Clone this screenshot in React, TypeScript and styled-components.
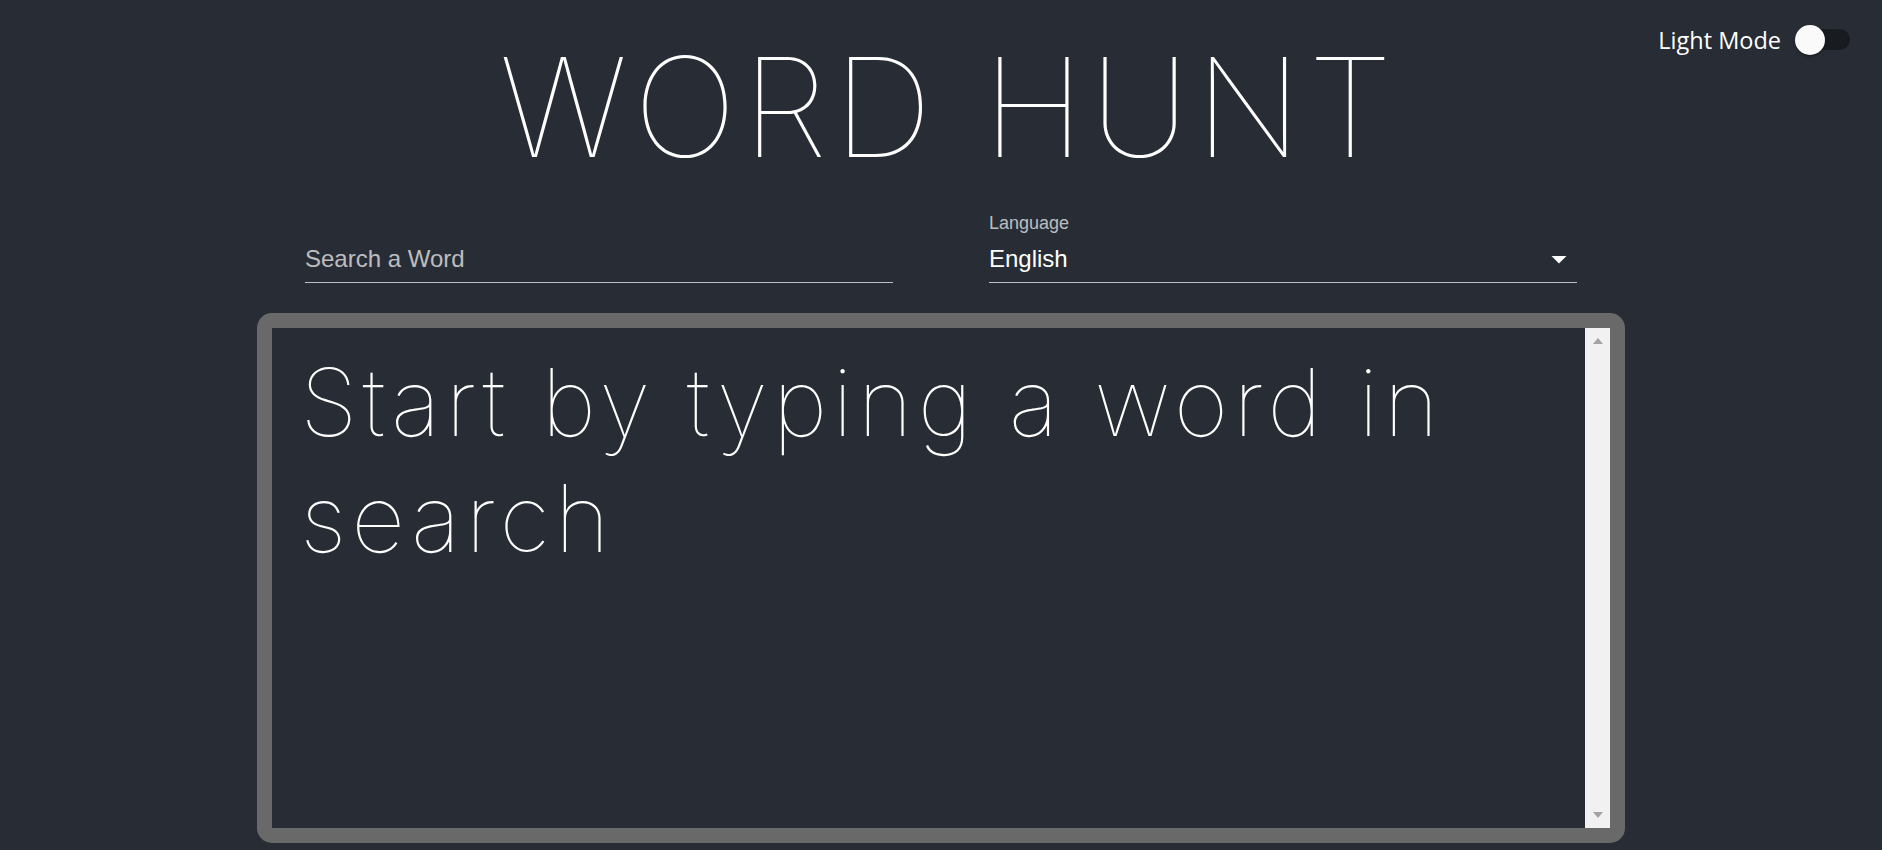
import React, { useState } from "react";
import styled, { createGlobalStyle } from "styled-components";

const GlobalStyle = createGlobalStyle`
  * { box-sizing: border-box; }
  body {
    margin: 0;
    background: #282c34;
    font-family: "Open Sans", "Noto Sans", sans-serif;
  }
`;

const Page = styled.div`
  position: relative;
  min-height: 100vh;
  padding-top: 38px;
  background: #282c34;
  color: #fff;
`;

const ModeToggle = styled.div`
  position: absolute;
  top: 11px;
  right: 14px;
  display: flex;
  align-items: center;
  font-family: "Open Sans", "Noto Sans", sans-serif;
  font-size: 23.5px;
  color: #fff;
`;

const SwitchRoot = styled.span`
  position: relative;
  display: inline-flex;
  width: 87px;
  height: 57px;
  padding: 18px;
  cursor: pointer;
`;

const SwitchTrack = styled.span`
  width: 100%;
  height: 100%;
  border-radius: 10.5px;
  background: #000;
  opacity: 0.38;
`;

const SwitchThumb = styled.span<{ $on: boolean }>`
  position: absolute;
  top: 13.5px;
  left: ${(p) => (p.$on ? "43.5px" : "13.5px")};
  width: 30px;
  height: 30px;
  border-radius: 50%;
  background: #fafafa;
  box-shadow: 0 3px 1.5px -2px rgba(0, 0, 0, 0.2),
    0 1.5px 1.5px 0 rgba(0, 0, 0, 0.14), 0 1.5px 4.5px 0 rgba(0, 0, 0, 0.12);
`;

const Title = styled.h1`
  margin: 0;
  padding-left: 16px;
  text-align: center;
  font-family: Inter, sans-serif;
  font-weight: 100;
  font-size: 138px;
  line-height: 1;
  letter-spacing: 6px;
`;

const Container = styled.div`
  width: 1368px;
  margin: 34px auto 0;
`;

const Controls = styled.div`
  display: flex;
  justify-content: space-around;
`;

const Field = styled.div`
  position: relative;
  width: 588px;
  font-family: "Liberation Sans", Arial, sans-serif;
`;

const FieldLabel = styled.label<{ $shrink?: boolean }>`
  position: absolute;
  left: 0;
  top: ${(p) => (p.$shrink ? "1.5px" : "31.5px")};
  font-size: ${(p) => (p.$shrink ? "18px" : "24px")};
  line-height: ${(p) => (p.$shrink ? "22px" : "34.5px")};
  color: rgba(255, 255, 255, 0.7);
  pointer-events: none;
`;

const InputRow = styled.div`
  display: flex;
  align-items: center;
  margin-top: 24px;
  padding: 7.5px 0 6px;
  border-bottom: 1.5px solid rgba(255, 255, 255, 0.7);
`;

const TextInput = styled.input`
  flex: 1;
  height: 34.5px;
  padding: 0;
  border: none;
  outline: none;
  background: transparent;
  font-family: "Liberation Sans", Arial, sans-serif;
  font-size: 24px;
  color: #fff;
`;

const SelectValue = styled.div`
  flex: 1;
  height: 34.5px;
  line-height: 34.5px;
  font-size: 24px;
  color: #fff;
`;

const DropIcon = styled.svg`
  width: 36px;
  height: 36px;
  margin: -1px 0 -1px;
  fill: #fff;
`;

const ResultBox = styled.div`
  display: flex;
  height: 530px;
  margin-top: 29.5px;
  border: 15px solid #696969;
  border-radius: 15px;
  background: #282c34;
  overflow: hidden;
`;

const ResultText = styled.div`
  flex: 1;
  padding: 16px 28px;
  font-family: Inter, sans-serif;
  font-weight: 100;
  font-size: 94px;
  line-height: 116px;
  letter-spacing: 5px;
  color: #fff;
`;

const ScrollTrack = styled.div`
  display: flex;
  flex-direction: column;
  justify-content: space-between;
  align-items: center;
  width: 25px;
  padding: 10px 0;
  background: #f1f1f1;
`;

const ScrollArrow = styled.span<{ $down?: boolean }>`
  width: 0;
  height: 0;
  border-left: 5.5px solid transparent;
  border-right: 5.5px solid transparent;
  ${(p) =>
    p.$down
      ? "border-top: 6px solid #a3a3a3;"
      : "border-bottom: 6px solid #a3a3a3;"}
`;

export default function App() {
  const [light, setLight] = useState(false);
  const [word, setWord] = useState("");

  return (
    <Page>
      <GlobalStyle />
      <ModeToggle>
        <span>Light Mode</span>
        <SwitchRoot onClick={() => setLight(!light)}>
          <SwitchTrack />
          <SwitchThumb $on={light} />
        </SwitchRoot>
      </ModeToggle>

      <Title>WORD HUNT</Title>

      <Container>
        <Controls>
          <Field>
            {!word && <FieldLabel htmlFor="search">Search a Word</FieldLabel>}
            <InputRow>
              <TextInput
                id="search"
                value={word}
                onChange={(e) => setWord(e.target.value)}
              />
            </InputRow>
          </Field>
          <Field>
            <FieldLabel $shrink>Language</FieldLabel>
            <InputRow>
              <SelectValue>English</SelectValue>
              <DropIcon viewBox="0 0 24 24">
                <path d="M7 10l5 5 5-5z" />
              </DropIcon>
            </InputRow>
          </Field>
        </Controls>

        <ResultBox>
          <ResultText>Start by typing a word in search</ResultText>
          <ScrollTrack>
            <ScrollArrow />
            <ScrollArrow $down />
          </ScrollTrack>
        </ResultBox>
      </Container>
    </Page>
  );
}
